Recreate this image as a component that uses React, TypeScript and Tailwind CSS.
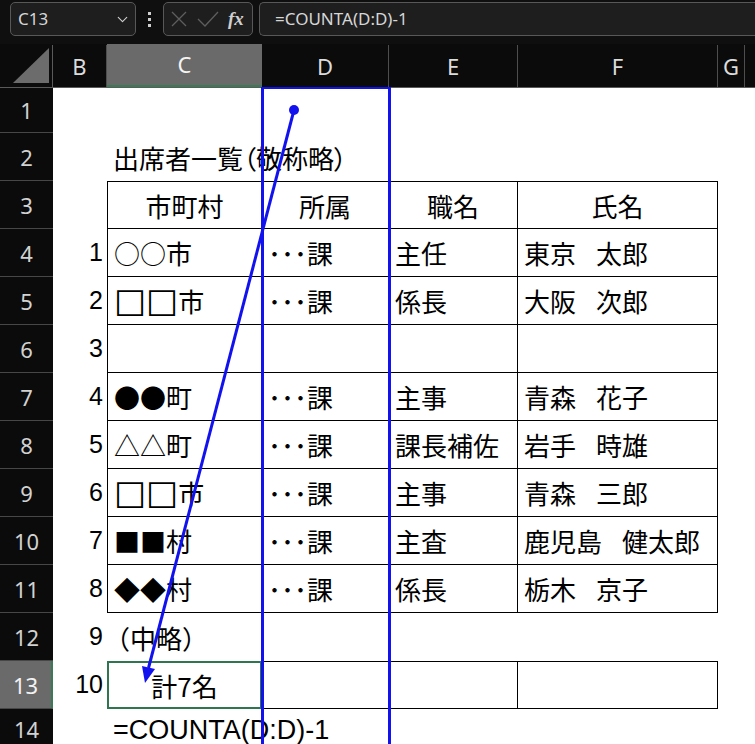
import { ChevronDown } from "lucide-react";

// column widths: row header, B, C, D, E, F, G, rest
const GRID = "grid grid-cols-[53px_54px_155px_127px_129px_200px_27px_1fr]";
const JP = "font-['Noto_Sans_CJK_JP',sans-serif]";
const LATIN = "font-['Liberation_Sans','Noto_Sans_CJK_JP',sans-serif]";
const UI = "font-['Noto_Sans','Liberation_Sans',sans-serif]";

const members = [
  ["1", "○○市", "･･･課", "主任", "東京　太郎"],
  ["2", "□□市", "･･･課", "係長", "大阪　次郎"],
  ["3", "", "", "", ""],
  ["4", "●●町", "･･･課", "主事", "青森　花子"],
  ["5", "△△町", "･･･課", "課長補佐", "岩手　時雄"],
  ["6", "□□市", "･･･課", "主事", "青森　三郎"],
  ["7", "■■村", "･･･課", "主査", "鹿児島　健太郎"],
  ["8", "◆◆村", "･･･課", "係長", "栃木　京子"],
];

const colLetters = ["B", "C", "D", "E", "F", "G"];

function RowHead({ n, active = false, last = false }: { n: number; active?: boolean; last?: boolean }) {
  return (
    <div
      className={`flex justify-center text-[22px] leading-none ${UI} ${
        last ? "items-end pb-[5px]" : "items-center border-b border-[#474747]"
      } ${
        active
          ? "bg-[#6a6a6a] text-[#f2f2f2] border-r-2 border-r-[#3b7a57]"
          : "bg-[#0b0b0b] text-[#d2d2d2]"
      }`}
    >
      {n}
    </div>
  );
}

function NumCell({ v }: { v?: string }) {
  return (
    <div className={`flex items-center justify-end pr-[4px] text-[25px] text-black ${LATIN}`}>
      {v}
    </div>
  );
}

function Town({ v }: { v: string }) {
  if (!v.startsWith("□")) return <>{v}</>;
  return (
    <>
      <span className="font-['DejaVu_Sans',sans-serif] text-[34px] leading-none">□□</span>
      {v.slice(2)}
    </>
  );
}

// surname / given name joined by a slightly narrower ideographic space
function Name({ v }: { v: string }) {
  if (!v) return null;
  const [last, first] = v.split("　");
  return (
    <>
      {last}
      <span className="tracking-[-6px]">　</span>
      {first}
    </>
  );
}

export default function App() {
  return (
    <div className="relative w-[755px] h-[744px] overflow-hidden bg-white">
      {/* formula bar */}
      <div className="flex h-[44px] bg-[#0f0f0f] pt-[2px]">
        <div className="ml-[10px] flex h-[34px] w-[126px] items-center justify-between rounded-[5px] border border-[#585858] bg-[#1e1e1e] pl-[7px] pr-[4px]">
          <span className={`text-[17px] text-[#d6d6d6] ${UI}`}>C13</span>
          <ChevronDown size={17} strokeWidth={1.6} className="text-[#cfcfcf]" />
        </div>
        <div className="ml-[12px] mr-[12px] flex flex-col justify-center gap-[3px] pb-[8px]">
          <span className="h-[3px] w-[3px] bg-[#cfcfcf]" />
          <span className="h-[3px] w-[3px] bg-[#cfcfcf]" />
          <span className="h-[3px] w-[3px] bg-[#cfcfcf]" />
        </div>
        <div className="flex h-[34px] w-[90px] items-center rounded-[5px] border border-[#585858] bg-[#1e1e1e] pl-[6px]">
          <svg width="18" height="18" viewBox="0 0 18 18" className="mr-[9px]">
            <path d="M2 2 L16 16 M16 2 L2 16" stroke="#5e5e5e" strokeWidth="1.3" fill="none" />
          </svg>
          <svg width="22" height="18" viewBox="0 0 22 18" className="mr-[9px]">
            <path d="M1 9 L8 16 L21 2" stroke="#5e5e5e" strokeWidth="1.3" fill="none" />
          </svg>
          <span className="font-['Liberation_Serif',serif] text-[19px] font-bold italic text-[#cfcfcf]">
            fx
          </span>
        </div>
        <div className="ml-[6px] flex h-[34px] flex-1 items-center rounded-l-[5px] border border-r-0 border-[#585858] bg-[#1e1e1e] pl-[15px]">
          <span className={`text-[17px] text-[#d6d6d6] ${UI}`}>=COUNTA(D:D)-1</span>
        </div>
      </div>

      {/* column headers */}
      <div className={`${GRID} h-[44px] bg-[#0b0b0b] border-b border-[#5a5a5a]`}>
        <div className="flex items-end justify-end border-r border-[#5a5a5a] pb-[4px] pr-[3px] mt-[1px]">
          <svg width="36" height="35" viewBox="0 0 36 35">
            <polygon points="36,0 36,35 0,35" fill="#6c6c6c" />
          </svg>
        </div>
        {colLetters.map((l) => (
          <div
            key={l}
            className={`flex items-center justify-center text-[22px] ${UI} ${
              l === "C"
                ? "bg-[#6a6a6a] text-[#f4f4f4] border-b-2 border-[#3b7a57]"
                : "text-[#dcdcdc] border-r border-[#4e4e4e] mt-[1px]"
            }`}
          >
            {l}
          </div>
        ))}
        <div />
      </div>

      {/* row 1 */}
      <div className={`${GRID} h-[45px]`}>
        <RowHead n={1} />
      </div>

      {/* row 2: title */}
      <div className={`${GRID} h-[48px]`}>
        <RowHead n={2} />
        <div />
        <div className={`col-span-3 flex items-center pl-[6px] text-[26px] text-black whitespace-nowrap ${JP} [font-feature-settings:'palt']`}>
          出席者一覧（敬称略）
        </div>
      </div>

      {/* row 3: table head */}
      <div className={`${GRID} h-[48px]`}>
        <RowHead n={3} />
        <div />
        {["市町村", "所属", "職名", "氏名"].map((h, i) => (
          <div
            key={h}
            className={`flex items-center justify-center border-y border-r border-black text-[26px] text-black ${JP} ${
              i === 0 ? "border-l" : ""
            }`}
          >
            {h}
          </div>
        ))}
      </div>

      {/* rows 4-11: members */}
      {members.map((m, i) => (
        <div key={m[0]} className={`${GRID} h-[48px]`}>
          <RowHead n={i + 4} />
          <NumCell v={m[0]} />
          <div className={`flex items-center border-x border-b border-black pl-[6px] text-[26px] text-black whitespace-nowrap ${JP}`}>
            <span>
              <Town v={m[1]} />
            </span>
          </div>
          <div className={`flex items-center border-r border-b border-black pl-[6px] text-[26px] text-black whitespace-nowrap ${JP}`}>
            {m[2]}
          </div>
          <div className={`flex items-center border-r border-b border-black pl-[6px] text-[26px] text-black whitespace-nowrap ${JP}`}>
            {m[3]}
          </div>
          <div className={`flex items-center border-r border-b border-black pl-[6px] text-[26px] text-black whitespace-nowrap ${JP}`}>
            <Name v={m[4]} />
          </div>
        </div>
      ))}

      {/* row 12 */}
      <div className={`${GRID} h-[48px]`}>
        <RowHead n={12} />
        <NumCell v="9" />
        <div className={`flex items-center -ml-[3px] text-[26px] text-black whitespace-nowrap ${JP}`}>
          （中略）
        </div>
      </div>

      {/* row 13: total */}
      <div className={`${GRID} h-[48px]`}>
        <RowHead n={13} active />
        <NumCell v="10" />
        <div className={`flex items-center justify-center border-2 border-[#2f7550] text-[26px] text-black ${JP}`}>
          計7名
        </div>
        <div className="border-y border-r border-black" />
        <div className="border-y border-r border-black" />
        <div className="border-y border-r border-black" />
      </div>

      {/* row 14: formula note (cut by the window edge) */}
      <div className={`${GRID} h-[36px]`}>
        <RowHead n={14} last />
        <div />
        <div className={`col-span-3 flex items-start pt-[6px] pl-[6px] text-[27px] leading-[30px] text-black whitespace-nowrap ${LATIN}`}>
          =COUNTA(D:D)-1
        </div>
      </div>

      {/* highlight on column D */}
      <div className="pointer-events-none absolute left-[261px] top-[87px] h-[700px] w-[130px] border-x-[3px] border-t-2 border-[#1212ee]" />

      {/* arrow from D1 down to C13 */}
      <svg
        className="pointer-events-none absolute left-0 top-0"
        width="755"
        height="744"
        viewBox="0 0 755 744"
      >
        <line x1="294" y1="110" x2="148.5" y2="668" stroke="#1212ee" strokeWidth="3" />
        <circle cx="294" cy="110" r="5" fill="#1212ee" />
        <polygon points="145,683 155,669 142,666" fill="#1212ee" />
      </svg>
    </div>
  );
}
